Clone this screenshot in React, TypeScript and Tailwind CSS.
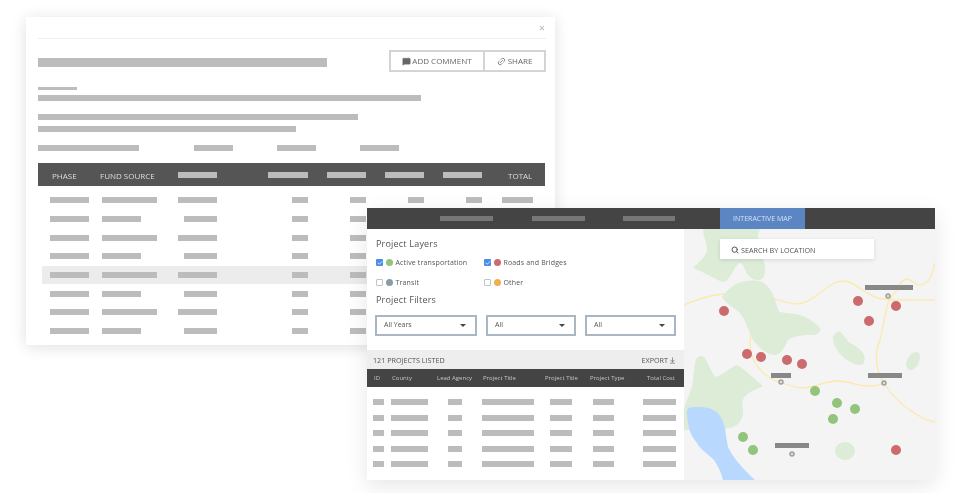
import { ArrowDownToLine, Link2, MessageSquare, Search, Check } from "lucide-react"

function Bar({ className }: { className: string }) {
    return <div className={`bg-[#bdbcbc] ${className}`} />
}

function BackRow({ long, active }: { long: boolean; active?: boolean }) {
    return (
        <div className={`ml-[4px] pl-[8px] h-[18.7px] flex items-center ${active ? "bg-[#ececec]" : ""}`}>
            <div className="w-[52px]"><Bar className="w-[39px] h-[6px]" /></div>
            <div className="w-[76px]"><Bar className={`h-[6px] ${long ? "w-[55px]" : "w-[39px]"}`} /></div>
            <div className="w-[39px] mr-[75px] flex justify-end"><Bar className={`h-[6px] ${long ? "w-[39px]" : "w-[33px]"}`} /></div>
            <Bar className="w-[16px] h-[6px] mr-[42px]" />
            <Bar className="w-[16px] h-[6px] mr-[42px]" />
            <Bar className="w-[16px] h-[6px] mr-[42px]" />
            <Bar className="w-[16px] h-[6px] mr-[20px]" />
            <Bar className="w-[31px] h-[6px]" />
        </div>
    )
}

function BackWindow() {
    const rows = [true, false, true, false, true, false, true, false]
    return (
        <div className="absolute left-[26px] top-[17px] w-[529px] h-[328px] bg-white pl-[12px] pr-[9px] shadow-[0_2px_14px_rgba(0,0,0,0.13)] overflow-hidden">
            <div className="h-[22px] border-b border-[#eeeeee] flex items-center justify-end pr-[1px]">
                <span className="text-[11px] leading-none text-[#b5b5b5]">×</span>
            </div>
            <div className="mt-[11px] h-[22px] flex justify-between">
                <Bar className="w-[289px] h-[9px] mt-[8px]" />
                <div className="flex h-[22px] border-2 border-[#d4d4d4] text-[8px] text-[#666666]">
                    <div className="w-[94px] flex items-center justify-center gap-[1px] border-r-2 border-[#d4d4d4]">
                        <MessageSquare size={9} fill="#666666" strokeWidth={1} />
                        <span>ADD COMMENT</span>
                    </div>
                    <div className="flex-1 w-[59px] flex items-center justify-center gap-[2px]">
                        <Link2 size={9} className="-rotate-45" />
                        <span>SHARE</span>
                    </div>
                </div>
            </div>
            <Bar className="w-[39px] h-[3px] mt-[15px]" />
            <Bar className="w-[383px] h-[6px] mt-[5px]" />
            <Bar className="w-[320px] h-[6px] mt-[13px]" />
            <Bar className="w-[258px] h-[6px] mt-[6px]" />
            <div className="flex mt-[13px]">
                <Bar className="w-[101px] h-[6px] mr-[55px]" />
                <Bar className="w-[39px] h-[6px] mr-[44px]" />
                <Bar className="w-[39px] h-[6px] mr-[44px]" />
                <Bar className="w-[39px] h-[6px]" />
            </div>
            <div className="mt-[12px] h-[23px] w-[507px] bg-[#555555] pl-[14px] flex items-center text-[8px] text-[#dddddd]">
                <span className="w-[48px] pt-[2px]">PHASE</span>
                <span className="w-[78px] pt-[2px]">FUND SOURCE</span>
                <Bar className="w-[39px] h-[6px] mr-[51px]" />
                <Bar className="w-[40px] h-[6px] mr-[19px]" />
                <Bar className="w-[39px] h-[6px] mr-[19px]" />
                <Bar className="w-[39px] h-[6px] mr-[19px]" />
                <Bar className="w-[39px] h-[6px] mr-[26px]" />
                <span className="pt-[2px]">TOTAL</span>
            </div>
            <div className="mt-[5px]">
                {rows.map((long, i) => <BackRow key={i} long={long} active={i === 4} />)}
            </div>
        </div>
    )
}

function Layer({ label, color, checked, className }: { label: string; color: string; checked: boolean; className: string }) {
    return (
        <div className={`flex items-center ${className}`}>
            {checked ? (
                <div className="w-[7px] h-[7px] rounded-[1px] bg-[#4d8de8] flex items-center justify-center">
                    <Check size={6} color="white" strokeWidth={3} />
                </div>
            ) : (
                <div className="w-[7px] h-[7px] rounded-[1px] border border-[#bcc4cc] bg-white" />
            )}
            <div className={`w-[7px] h-[7px] rounded-full ml-[3px] mr-[2.5px] ${color}`} />
            <span className="text-[7px] leading-none tracking-[0.15px] text-[#555555]">{label}</span>
        </div>
    )
}

function Filter({ label, className }: { label: string; className: string }) {
    return (
        <div className={`h-[21px] border-2 border-[#a9b7c4] bg-white flex items-center justify-between pl-[7px] pr-[9px] text-[7px] text-[#555555] ${className}`}>
            <span>{label}</span>
            <div className="w-0 h-0 border-l-[3px] border-r-[3px] border-t-[3px] border-l-transparent border-r-transparent border-t-[#444444]" />
        </div>
    )
}

function ProjectTable() {
    const head = [
        ["ID", "w-[18px]"],
        ["County", "w-[45px]"],
        ["Lead Agency", "w-[46px]"],
        ["Project Title", "w-[62px]"],
        ["Project Title", "w-[45px]"],
        ["Project Type", "w-[57px]"],
        ["Total Cost", "w-[32px]"],
    ]
    return (
        <div>
            <div className="h-[19px] bg-[#eeeeee] pl-[6px] pr-[8px] pt-[2px] flex items-center justify-between text-[7.2px] text-[#555555]">
                <span>121 PROJECTS LISTED</span>
                <span className="flex items-center gap-[1px]">EXPORT <ArrowDownToLine size={7} /></span>
            </div>
            <div className="h-[18px] bg-[#444444] pl-[7px] pt-[1px] flex items-center text-[6px] text-[#c4c4c4] whitespace-nowrap">
                {head.map(([label, w], i) => <span key={i} className={w}>{label}</span>)}
            </div>
            <div className="pt-[12px] pl-[6px] flex flex-col gap-[9.5px]">
                {[0, 1, 2, 3, 4].map(i => (
                    <div key={i} className="flex h-[6px]">
                        <div className="w-[18px]"><Bar className="w-[11px] h-[6px]" /></div>
                        <div className="w-[57px]"><Bar className="w-[37px] h-[6px]" /></div>
                        <div className="w-[34px]"><Bar className="w-[14px] h-[6px]" /></div>
                        <div className="w-[68px]"><Bar className="w-[52px] h-[6px]" /></div>
                        <div className="w-[43px]"><Bar className="w-[22px] h-[6px]" /></div>
                        <div className="w-[50px]"><Bar className="w-[21px] h-[6px]" /></div>
                        <Bar className="w-[33px] h-[6px]" />
                    </div>
                ))}
            </div>
        </div>
    )
}

function MapDrawing() {
    const red = [[724, 311], [858, 301], [869, 321], [896, 306], [747, 354], [761, 357], [787, 360], [802, 364], [896, 450]]
    const green = [[815, 391], [837, 403], [855, 409], [833, 419], [743, 437], [753, 450]]
    const labels = [[865, 285, 48], [771, 373, 20], [868, 373, 34], [775, 443, 34]]
    const rings = [[888, 296], [781, 382], [884, 383], [792, 454]]
    return (
        <svg className="block w-[251px] h-[251px]" viewBox="684 229 251 251">
            <rect x="684" y="229" width="251" height="251" fill="#f4f4f4" />
            <g fill="none" stroke="#fbe9ad" strokeWidth="1.3">
                <path d="M684 305C700 298 712 295 723 294C745 292 760 296 775 299C785 302 790 304 797 304C808 304 815 296 820 293C830 285 836 281 843 281C853 281 860 289 867 293C873 296 878 299 883 299C900 301 918 300 935 300" />
                <path d="M935 263C932 275 930 283 921 285C914 286 913 279 907 279C901 279 899 286 897 290C892 296 890 298 888 303C884 318 882 332 880 340C875 352 874 368 885 385C893 397 905 407 910 410C918 416 926 421 935 422" />
                <path d="M751 333C749 345 750 358 758 367C765 376 772 380 780 382C790 386 797 388 803 388C815 387 825 381 837 381C850 381 860 387 870 386C875 386 880 385 885 383" />
            </g>
            <g fill="#dcecd7">
                <path d="M703 229L760 229C759 232 758 234 758 237C760 250 766 262 765 272C764 278 762 280 758 280C752 280 748 276 746 272C744 267 742 263 740 263C734 265 730 282 723 282C716 280 704 272 693 268C698 262 706 258 707 250C707 243 703 236 703 229Z" />
                <path d="M722 297C727 290 732 286 738 283C745 281 755 279 762 282C768 285 773 293 775 300C777 306 778 311 780 312C788 314 794 313 800 315C808 318 816 323 820 328C821 332 817 335 813 335C805 335 795 335 788 340C784 348 781 355 775 355C767 355 758 347 753 340C751 337 751 335 750 333C747 326 744 318 740 313C735 308 727 305 722 297Z" />
                <path d="M833 337C835 333 838 331 840 332C844 334 846 340 850 343C855 345 860 349 863 353C866 358 865 365 860 365C854 365 848 361 843 357C838 352 833 346 833 337Z" />
                <path d="M918 352C920 354 920 356 920 358C919 364 915 369 912 370C909 371 906 368 906 365C906 361 908 358 910 355C912 353 916 351 918 352Z" />
                <path d="M684 430L684 409C686 400 692 392 693 380C694 370 695 358 698 357C701 355 703 356 705 358C708 363 712 373 715 377C722 376 730 367 737 365C745 369 755 380 763 386C755 390 745 393 743 400C741 406 744 410 743 415C741 423 735 427 730 428C715 430 700 430 684 430Z" />
                <ellipse cx="845" cy="451" rx="10" ry="9" />
            </g>
            <path d="M687 410C689 407 692 407 696 407C702 407 708 407 713 410C720 413 723 420 725 428C726 436 727 442 728 447C733 458 745 471 755 480L723 480C721 472 718 466 714 460C708 454 700 449 697 443C691 436 687 427 687 410Z" fill="#b9d8fd" />
            {red.map(([x, y], i) => <circle key={i} cx={x} cy={y} r="5" fill="#cb6b6d" />)}
            {green.map(([x, y], i) => <circle key={i} cx={x} cy={y} r="5" fill="#93c47d" />)}
            {labels.map(([x, y, w], i) => <rect key={i} x={x} y={y} width={w} height="5" fill="#888888" />)}
            {rings.map(([x, y], i) => <circle key={i} cx={x} cy={y} r="2" fill="#dddddd" stroke="#a0a0a0" strokeWidth="1.5" />)}
        </svg>
    )
}

function FrontWindow() {
    return (
        <div className="absolute left-[367px] top-[208px] w-[568px] h-[272px] flex flex-col bg-white rounded-br-[12px] overflow-hidden shadow-[0_6px_22px_rgba(0,0,0,0.1)]">
            <div className="h-[21px] bg-[#444444] flex items-center pl-[73px] shrink-0">
                <div className="w-[53px] h-[5px] bg-[#777777] mr-[39px]" />
                <div className="w-[53px] h-[5px] bg-[#777777] mr-[38px]" />
                <div className="w-[52px] h-[5px] bg-[#777777] mr-[45px]" />
                <div className="w-[85px] h-[21px] bg-[#5b86c3] text-[#d3e2f5] text-[7px] pt-[1px] flex items-center justify-center">INTERACTIVE MAP</div>
            </div>
            <div className="flex flex-1">
                <div className="w-[317px] flex flex-col">
                    <div className="h-[121px] pl-[9px] pr-[8px] pt-[9px]">
                        <div className="text-[9px] leading-[12px] tracking-[0.2px] text-[#555555]">Project Layers</div>
                        <div className="flex mt-[9px]">
                            <Layer className="w-[108px]" label="Active transportation" color="bg-[#93c47d]" checked />
                            <Layer className="" label="Roads and Bridges" color="bg-[#cb6b6d]" checked />
                        </div>
                        <div className="flex mt-[12.5px]">
                            <Layer className="w-[108px]" label="Transit" color="bg-[#8a9ba8]" checked={false} />
                            <Layer className="" label="Other" color="bg-[#eeb04c]" checked={false} />
                        </div>
                        <div className="text-[9px] leading-[12px] tracking-[0.2px] text-[#555555] mt-[8px]">Project Filters</div>
                        <div className="flex gap-[9px] mt-[9px] -ml-[1px]">
                            <Filter label="All Years" className="w-[102px]" />
                            <Filter label="All" className="w-[90px]" />
                            <Filter label="All" className="w-[91px]" />
                        </div>
                    </div>
                    <ProjectTable />
                </div>
                <div className="relative flex-1">
                    <MapDrawing />
                    <div className="absolute left-[36px] top-[10px] w-[154px] h-[20px] bg-white shadow-[0_1px_4px_rgba(0,0,0,0.12)] pt-[2px] flex items-center pl-[11px] gap-[2px] text-[7.2px] text-[#555555]">
                        <Search size={8} strokeWidth={3} />
                        <span>SEARCH BY LOCATION</span>
                    </div>
                </div>
            </div>
        </div>
    )
}

export default function App() {
    return (
        <div className="relative w-[963px] h-[493px] bg-white overflow-hidden blur-[0.4px] font-['Open_Sans',sans-serif]">
            <BackWindow />
            <FrontWindow />
        </div>
    )
}
